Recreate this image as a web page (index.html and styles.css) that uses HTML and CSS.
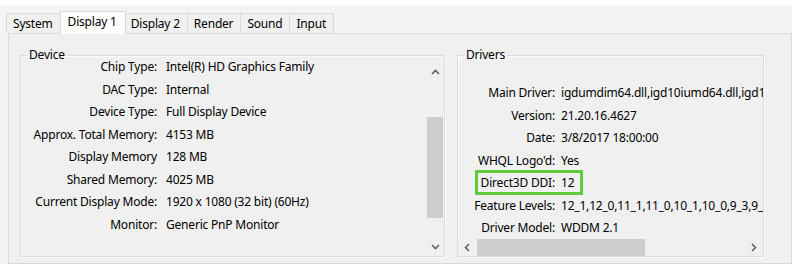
FILE: index.html
```html
<!DOCTYPE html>
<html lang="en">

<head>
    <meta charset="UTF-8">
    <meta name="viewport" content="width=device-width, initial-scale=1.0">
    <title>DirectX Diagnostic Tool - Display 1</title>

    <link rel="stylesheet" href="styles.css">
</head>

<body>
    <div class="window">
        <div class="tabs">
            <div class="tab">System</div>
            <div class="tab active">Display 1</div>
            <div class="tab">Display 2</div>
            <div class="tab">Render</div>
            <div class="tab">Sound</div>
            <div class="tab">Input</div>
        </div>

        <main class="panel">
            <fieldset class="group device">
                <legend>Device</legend>
                <div class="group-body">
                    <div class="rows">
                        <div class="row"><span class="label">Chip Type:</span><span>Intel(R) HD Graphics Family</span></div>
                        <div class="row"><span class="label">DAC Type:</span><span>Internal</span></div>
                        <div class="row"><span class="label">Device Type:</span><span>Full Display Device</span></div>
                        <div class="row"><span class="label">Approx. Total Memory:</span><span>4153 MB</span></div>
                        <div class="row"><span class="label">Display Memory</span><span>128 MB</span></div>
                        <div class="row"><span class="label">Shared Memory:</span><span>4025 MB</span></div>
                        <div class="row"><span class="label">Current Display Mode:</span><span>1920 x 1080 (32 bit) (60Hz)</span></div>
                        <div class="row"><span class="label">Monitor:</span><span>Generic PnP Monitor</span></div>
                    </div>

                    <div class="vscroll">
                        <div class="sb-btn">
                            <svg width="9" height="6" viewBox="0 0 9 6"><polyline points="1,5 4.5,1.5 8,5" /></svg>
                        </div>
                        <div class="sb-track">
                            <div class="sb-thumb"></div>
                        </div>
                        <div class="sb-btn">
                            <svg width="9" height="6" viewBox="0 0 9 6"><polyline points="1,1 4.5,4.5 8,1" /></svg>
                        </div>
                    </div>
                </div>
            </fieldset>

            <fieldset class="group drivers">
                <legend>Drivers</legend>
                <div class="group-body">
                    <div class="rows">
                        <div class="row"><span class="label">Main Driver:</span><span class="value">igdumdim64.dll,igd10iumd64.dll,igd10iumd64.dll</span></div>
                        <div class="row"><span class="label">Version:</span><span class="value">21.20.16.4627</span></div>
                        <div class="row"><span class="label">Date:</span><span class="value">3/8/2017 18:00:00</span></div>
                        <div class="row"><span class="label">WHQL Logo'd:</span><span class="value">Yes</span></div>
                        <div class="row"><span class="label">Direct3D DDI:</span><span class="value">12</span><span class="highlight"></span></div>
                        <div class="row"><span class="label">Feature Levels:</span><span class="value">12_1,12_0,11_1,11_0,10_1,10_0,9_3,9_2,9_1</span></div>
                        <div class="row"><span class="label">Driver Model:</span><span class="value">WDDM 2.1</span></div>
                    </div>

                    <div class="hscroll">
                        <div class="sb-btn">
                            <svg width="6" height="9" viewBox="0 0 6 9"><polyline points="5,1 1.5,4.5 5,8" /></svg>
                        </div>
                        <div class="sb-track">
                            <div class="sb-thumb"></div>
                        </div>
                        <div class="sb-btn">
                            <svg width="6" height="9" viewBox="0 0 6 9"><polyline points="1,1 4.5,4.5 1,8" /></svg>
                        </div>
                    </div>
                </div>
            </fieldset>
        </main>
    </div>
</body>

</html>
```

FILE: styles.css
```css
body {
    margin: 0;
    background: #fff;
    color: #000;
    font-family: "Noto Sans", sans-serif;
    font-size: 12px;
    letter-spacing: -0.2px;
}

.window {
    margin-top: 5px;
    width: 792px;
    height: 259px;
    background: #f4f4f4;
    display: flex;
    flex-direction: column;
}

/* tab strip */

.tabs {
    display: flex;
    height: 20px;
    padding: 8px 0 0 7px;
}

.tab {
    padding: 0 7px 0 6px;
    line-height: 19px;
    border: 1px solid #d9d9d9;
    border-bottom: 0;
    margin-left: -1px;
    background: #f0f0f0;
    white-space: nowrap;
}

.tab.active {
    position: relative;
    z-index: 1;
    background: #fff;
    margin: -2px -1px -1px -1px;
    padding: 0 8px 0 7px;
    line-height: 20px;
}

/* tab page */

.panel {
    flex: 1;
    margin-left: 8px;
    width: 784px;
    box-sizing: border-box;
    border: 1px solid #d9d9d9;
    background: #f0f0f0;
    display: flex;
    align-items: flex-start;
    gap: 12px;
    padding: 13px 27px 0 11px;
}

.group {
    margin: 0;
    padding: 0;
    min-width: 0;
    box-sizing: border-box;
    height: 210px;
    border: 1px solid #dcdcdc;
    box-shadow: inset 1px 1px #fbfbfb, 1px 1px #fbfbfb;
}

.group legend {
    padding: 0 2px;
    margin-left: 6px;
    line-height: 16px;
}

.device {
    width: 425px;
    flex: 0 0 425px;
    --label-w: 136px;
    --gap: 9px;
}

.drivers {
    width: 307px;
    flex: 0 0 307px;
    --label-w: 97px;
    --gap: 6px;
}

.group-body {
    height: 193px;
    display: flex;
}

.drivers .group-body {
    flex-direction: column;
}

.rows {
    flex: 1;
    min-width: 0;
    min-height: 0;
}

.device .rows {
    margin-top: -7px;
}

.drivers .rows {
    position: relative;
    overflow: hidden;
    padding-top: 19px;
}

.row {
    position: relative;
    display: flex;
    height: 22.5px;
    line-height: 22.5px;
    white-space: nowrap;
}

.label {
    flex: 0 0 var(--label-w);
    margin-right: var(--gap);
    text-align: right;
}

.highlight {
    position: absolute;
    left: 17px;
    top: -2px;
    width: 108px;
    height: 25px;
    box-sizing: border-box;
    border: 3px solid #5fcb3c;
}

/* scrollbars */

.vscroll {
    flex: 0 0 18px;
    display: flex;
    flex-direction: column;
    background: #f0f0f0;
}

.hscroll {
    flex: 0 0 18px;
    display: flex;
    background: #f0f0f0;
}

.sb-btn {
    flex: 0 0 18px;
    display: flex;
    justify-content: center;
    align-items: center;
}

.sb-btn svg polyline {
    fill: none;
    stroke: #606060;
    stroke-width: 1.6;
}

.sb-track {
    flex: 1 1 0;
    min-width: 0;
}

.vscroll .sb-track {
    padding-top: 36px;
}

.vscroll .sb-thumb {
    height: 101px;
    margin: 0 1px;
    background: #cdcdcd;
}

.hscroll .sb-thumb {
    width: 168px;
    height: 17px;
    margin: 1px 0 0 1px;
    background: #cdcdcd;
}
```
